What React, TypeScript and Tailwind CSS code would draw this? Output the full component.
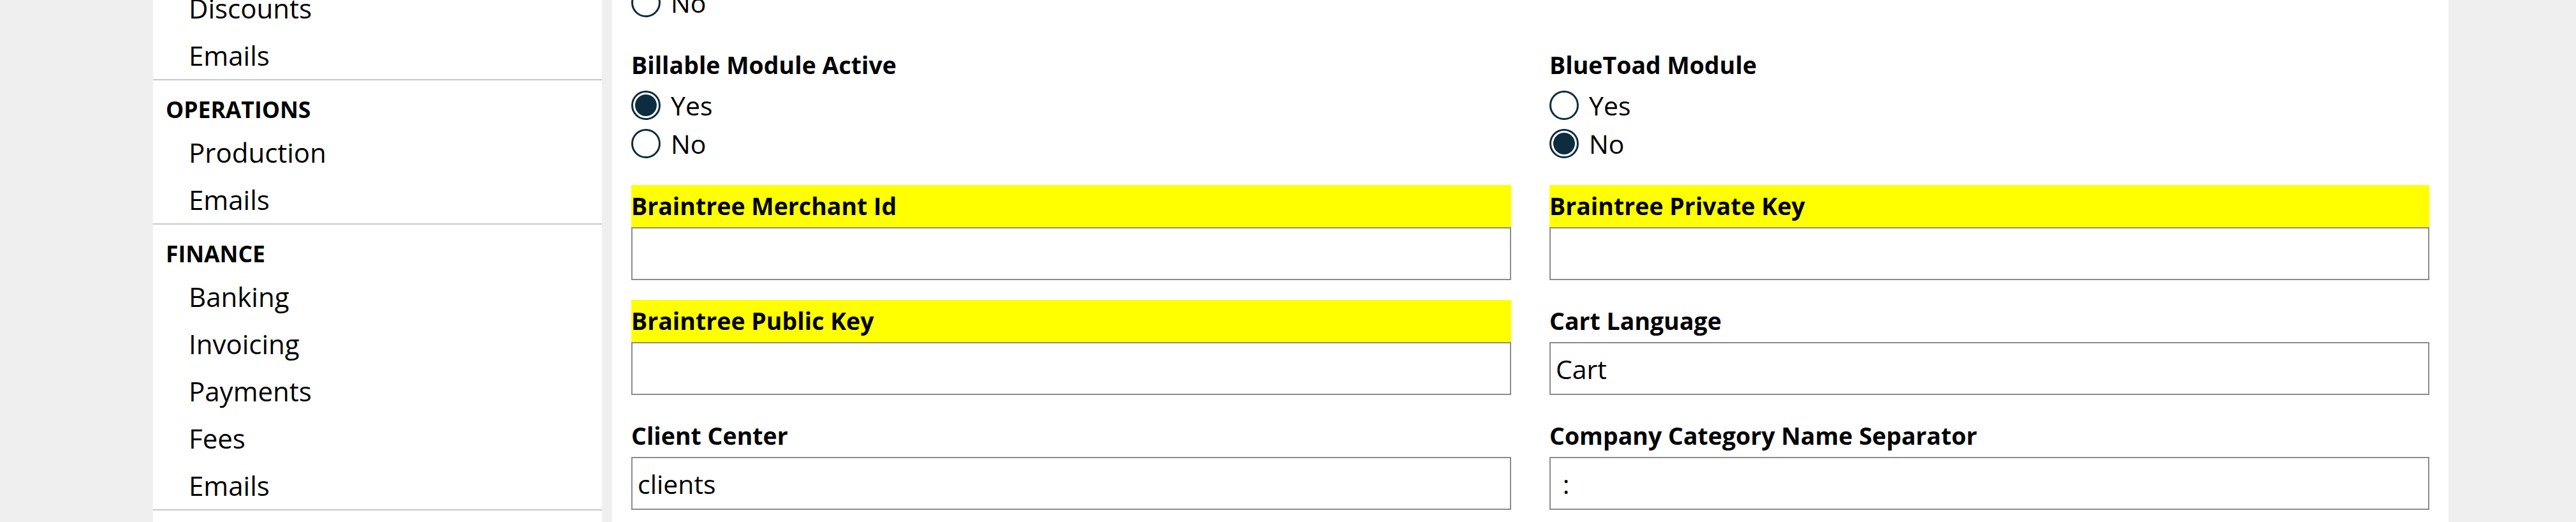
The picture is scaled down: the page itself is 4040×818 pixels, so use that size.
import { ReactNode } from 'react';

type Field =
  | { kind: 'radio'; label: string; value: 'yes' | 'no' }
  | { kind: 'text'; label: string; value: string; highlight?: boolean }
  | { kind: 'empty' };

const sections: { title?: string; items: string[] }[] = [
  { items: ['Discounts', 'Emails'] },
  { title: 'OPERATIONS', items: ['Production', 'Emails'] },
  { title: 'FINANCE', items: ['Banking', 'Invoicing', 'Payments', 'Fees', 'Emails'] },
];

const fields: Field[] = [
  { kind: 'radio', label: 'Auto Approve Module', value: 'yes' },
  { kind: 'empty' },
  { kind: 'radio', label: 'Billable Module Active', value: 'yes' },
  { kind: 'radio', label: 'BlueToad Module', value: 'no' },
  { kind: 'text', label: 'Braintree Merchant Id', value: '', highlight: true },
  { kind: 'text', label: 'Braintree Private Key', value: '', highlight: true },
  { kind: 'text', label: 'Braintree Public Key', value: '', highlight: true },
  { kind: 'text', label: 'Cart Language', value: 'Cart' },
  { kind: 'text', label: 'Client Center', value: 'clients' },
  { kind: 'text', label: 'Company Category Name Separator', value: ' : ' },
];

function Radio({ checked, children }: { checked: boolean; children: ReactNode }) {
  return (
    <label className="flex h-[60px] items-center gap-[16px]">
      <span className="flex h-[46px] w-[46px] items-center justify-center rounded-full border-[3px] border-[#0d2c40] bg-white">
        {checked && <span className="h-[34px] w-[34px] rounded-full bg-[#0d2c40]" />}
      </span>
      <span className="text-[41px] leading-[60px]">{children}</span>
    </label>
  );
}

function FieldLabel({ text, highlight }: { text: string; highlight?: boolean }) {
  return (
    <div className={`h-[66px] text-[37.5px] font-bold leading-[66px] ${highlight ? 'bg-[#ffff00]' : ''}`}>
      {text}
    </div>
  );
}

function FormField({ field }: { field: Field }) {
  if (field.kind === 'empty') return <div />;

  if (field.kind === 'radio') {
    return (
      <div className="mb-[35px]">
        <FieldLabel text={field.label} />
        <Radio checked={field.value === 'yes'}>Yes</Radio>
        <Radio checked={field.value === 'no'}>No</Radio>
      </div>
    );
  }

  return (
    <div className="mb-[31px]">
      <FieldLabel text={field.label} highlight={field.highlight} />
      <input
        readOnly
        value={field.value}
        className="block h-[83px] w-full border-2 border-[#8c8c8c] bg-white pl-[8px] text-[41px] whitespace-pre text-black outline-none"
      />
    </div>
  );
}

export default function App() {
  return (
    <div className="flex h-[818px] w-full overflow-hidden bg-[#efefef] font-['Open_Sans',sans-serif] text-black">
      <div className="w-[240px] shrink-0" />

      {/* sidebar */}
      <nav className="w-[704px] shrink-0 bg-white">
        <div className="-mt-[24px]">
          {sections.map((s, i) => (
            <div key={i} className="border-b-2 border-[#c8c8c8]">
              {s.title && (
                <div className="pl-[20px] pt-[21px] pb-[7px] text-[35.5px] font-bold leading-[48px]">{s.title}</div>
              )}
              {s.items.map((item, j) => (
                <div key={j} className="h-[74px] pl-[56px] text-[42px] leading-[74px]">
                  {item}
                </div>
              ))}
            </div>
          ))}
        </div>
      </nav>

      <div className="w-[16px] shrink-0" />

      {/* settings form */}
      <main className="w-[2880px] shrink-0 bg-white px-[30px]">
        <div className="-mt-[152px] grid grid-cols-2 gap-x-[60px]">
          {fields.map((f, i) => (
            <FormField key={i} field={f} />
          ))}
        </div>
      </main>
    </div>
  );
}
